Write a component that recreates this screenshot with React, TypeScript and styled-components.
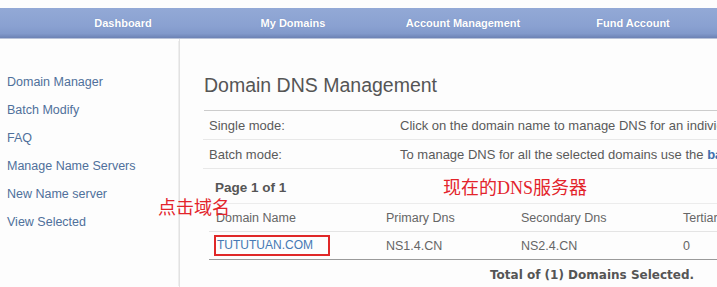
import React from 'react'
import styled, { createGlobalStyle } from 'styled-components'

const Global = createGlobalStyle`
  html, body {
    margin: 0;
    padding: 0;
    background: #ffffff;
    font-family: 'Liberation Sans', Arial, sans-serif;
  }
`

const Page = styled.div`
  width: 717px;
  height: 287px;
  overflow: hidden;
  padding-top: 8px;
  box-sizing: border-box;
  background: #fdfdfd;
`

const NavBar = styled.nav`
  height: 30px;
  display: flex;
  padding-left: 38px;
  background: linear-gradient(#93a9d6 0%, #8aa1d1 60%, #8199cb 85%, #6c82b4 100%);
  border-bottom: 1px solid #b7c1d8;
`

const NavItem = styled.a`
  width: 170px;
  flex-shrink: 0;
  text-align: center;
  line-height: 30px;
  font-size: 11px;
  font-weight: bold;
  color: #ffffff;
  text-shadow: 0 0 1px #6f85b7;
  text-decoration: none;
`

const Main = styled.div`
  display: flex;
`

const Sidebar = styled.aside`
  width: 179px;
  flex-shrink: 0;
  padding: 29px 0 0 7px;
  box-sizing: border-box;
  display: flex;
  flex-direction: column;
`

const SideLink = styled.a`
  font-size: 12.5px;
  line-height: 28px;
  color: #4f709b;
  text-decoration: none;
`

const Content = styled.section`
  flex: 1;
  min-width: 0;
  border-left: 1px solid #e2e2e2;
  box-shadow: -3px 0 0 -2px #eeeeee;
  padding-left: 23px;
  height: 249px;
  overflow: hidden;
`

const Title = styled.h1`
  margin: 31px 0 0 1px;
  padding-bottom: 10px;
  font-size: 19.5px;
  line-height: 30px;
  font-weight: normal;
  color: #555555;
  border-bottom: 1px solid #cccccc;
  white-space: nowrap;
`

const InfoRow = styled.div`
  display: flex;
  height: 28px;
  align-items: center;
  padding-left: 6px;
  border-bottom: 1px solid #e8e8e8;
  font-size: 13px;
  color: #5a5a5a;
  white-space: nowrap;
`

const InfoLabel = styled.span`
  width: 191px;
  flex-shrink: 0;
`

const StrongLink = styled.b`
  color: #3f6fae;
`

const PageInfo = styled.div`
  margin: 9px 0 0 12px;
  line-height: 20px;
  font-size: 13.5px;
  font-weight: bold;
  color: #555555;
`

const Table = styled.div`
  margin: 5px 0 0 7px;
  width: 700px;
  border-top: 1px solid #ececec;
`

const TableRow = styled.div<{ $last?: boolean }>`
  display: flex;
  height: 27px;
  align-items: center;
  margin-left: -1px;
  padding-left: 1px;
  border-bottom: 1px solid ${p => (p.$last ? '#9a9a9a' : '#e4e4e4')};
  font-size: 12.5px;
  color: #666666;
  white-space: nowrap;
`

const Cell = styled.div<{ $w: number }>`
  width: ${p => p.$w}px;
  flex-shrink: 0;
  padding-left: 6px;
  box-sizing: border-box;
`

const DomainCell = styled(Cell)`
  padding-left: 4px;
`

const Highlight = styled.span`
  display: inline-block;
  width: 116px;
  height: 21px;
  box-sizing: border-box;
  border: 2px solid #e02828;
  padding-left: 1px;
  line-height: 17px;
  font-size: 12px;
`

const DomainLink = styled.a`
  color: #4579b4;
  text-decoration: none;
`

const Total = styled.div`
  padding-left: 287px;
  line-height: 30px;
  font-family: 'DejaVu Sans', Verdana, sans-serif;
  font-size: 12px;
  font-weight: bold;
  color: #555555;
  white-space: nowrap;
`

const Note = styled.span<{ $x: number; $y: number }>`
  position: absolute;
  left: ${p => p.$x}px;
  top: ${p => p.$y}px;
  font-family: 'Liberation Serif', 'Noto Sans CJK SC', serif;
  font-size: 18px;
  line-height: 20px;
  color: #e3242b;
  white-space: nowrap;
  z-index: 2;
`

const Shell = styled.div`
  position: relative;
`

const navItems = ['Dashboard', 'My Domains', 'Account Management', 'Fund Account']
const sideItems = ['Domain Manager', 'Batch Modify', 'FAQ', 'Manage Name Servers', 'New Name server', 'View Selected']
const cols = [170, 135, 162, 200]

export default function App() {
  return (
    <Page>
      <Global />
      <NavBar>
        {navItems.map(n => (
          <NavItem key={n}>{n}</NavItem>
        ))}
      </NavBar>
      <Shell>
        <Main>
          <Sidebar>
            {sideItems.map(s => (
              <SideLink key={s}>{s}</SideLink>
            ))}
          </Sidebar>
          <Content>
            <Title>Domain DNS Management</Title>
            <InfoRow>
              <InfoLabel>Single mode:</InfoLabel>
              <span>Click on the domain name to manage DNS for an individual domain.</span>
            </InfoRow>
            <InfoRow>
              <InfoLabel>Batch mode:</InfoLabel>
              <span>
                To manage DNS for all the selected domains use the <StrongLink>batch mode</StrongLink>.
              </span>
            </InfoRow>
            <PageInfo>Page 1 of 1</PageInfo>
            <Table>
              <TableRow>
                <Cell $w={cols[0]}>Domain Name</Cell>
                <Cell $w={cols[1]}>Primary Dns</Cell>
                <Cell $w={cols[2]}>Secondary Dns</Cell>
                <Cell $w={cols[3]}>Tertiary Dns</Cell>
              </TableRow>
              <TableRow $last>
                <DomainCell $w={cols[0]}>
                  <Highlight>
                    <DomainLink>TUTUTUAN.COM</DomainLink>
                  </Highlight>
                </DomainCell>
                <Cell $w={cols[1]}>NS1.4.CN</Cell>
                <Cell $w={cols[2]}>NS2.4.CN</Cell>
                <Cell $w={cols[3]}>0</Cell>
              </TableRow>
            </Table>
            <Total>Total of (1) Domains Selected.</Total>
          </Content>
        </Main>
        <Note $x={443} $y={139}>现在的DNS服务器</Note>
        <Note $x={158} $y={159}>点击域名</Note>
      </Shell>
    </Page>
  )
}
